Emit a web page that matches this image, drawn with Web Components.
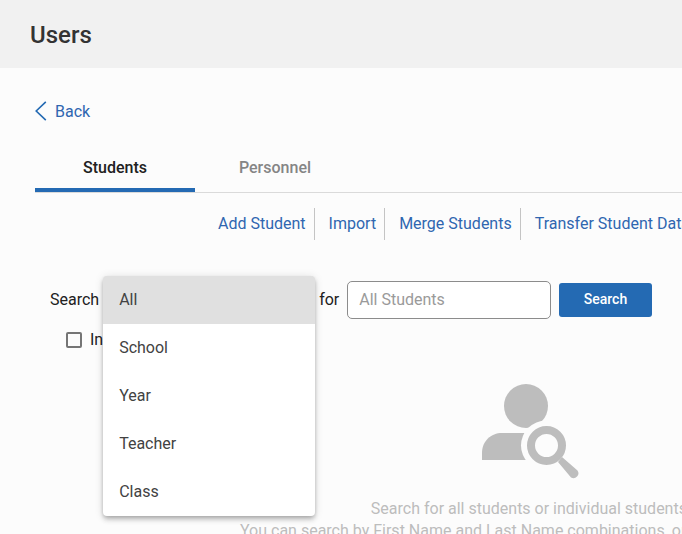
<!DOCTYPE html>
<html lang="en">
<head>
<meta charset="utf-8">
<meta name="viewport" content="width=device-width, initial-scale=1">
<title>Users</title>
<style>
    :root {
        --blue: #246ab3;
        --link: #2f66b0;
        --ink: #212121;
        --muted: #bdbdbd;
        --line: #dadada;
    }

    body {
        margin: 0;
        min-height: 100vh;
        background: #fcfcfc;
        color: var(--ink);
        font: 16px/22px Roboto, "Liberation Sans", sans-serif;
        overflow: hidden;
    }

    main {
        padding: 32px 0 0 35px;
    }
</style>
</head>
<body>
<page-header>Users</page-header>
<main>
    <back-link href="#back">Back</back-link>
    <tab-bar>
        <tab-item selected>Students</tab-item>
        <tab-item>Personnel</tab-item>
    </tab-bar>
    <action-bar>
        <action-link href="#add">Add Student</action-link>
        <action-link href="#import">Import</action-link>
        <action-link href="#merge">Merge Students</action-link>
        <action-link href="#transfer">Transfer Student Data</action-link>
    </action-bar>
    <student-search></student-search>
    <empty-state>
        <span>Search for all students or individual students.</span>
        <span slot="hint">You can search by First Name and Last Name combinations, or</span>
    </empty-state>
</main>

<script>
class PageHeader extends HTMLElement {
    constructor() {
        super();
        this.attachShadow({ mode: 'open' }).innerHTML = `
            <style>
                :host {
                    display: block;
                    padding: 19px 30px 17px;
                    background: #f1f1f1;
                }
                h1 {
                    margin: 0;
                    color: #333;
                    font-size: 24px;
                    font-weight: 500;
                    line-height: 32px;
                }
            </style>
            <h1><slot></slot></h1>
        `;
    }
}

class BackLink extends HTMLElement {
    constructor() {
        super();
        this.attachShadow({ mode: 'open' }).innerHTML = `
            <style>
                :host { display: flex; }
                a {
                    display: flex;
                    align-items: center;
                    gap: 8px;
                    color: var(--link);
                    line-height: 24px;
                    text-decoration: none;
                }
                svg {
                    fill: none;
                    stroke: var(--blue);
                    stroke-width: 1.6;
                }
            </style>
            <a href="${this.getAttribute('href')}">
                <svg width="12" height="22" viewBox="0 0 12 22" aria-hidden="true"><path d="M10.8 .8 1.2 10l9.6 9.2"/></svg>
                <slot></slot>
            </a>
        `;
    }
}

class TabBar extends HTMLElement {
    constructor() {
        super();
        this.attachShadow({ mode: 'open' }).innerHTML = `
            <style>
                :host {
                    display: flex;
                    margin-top: 20px;
                    border-bottom: 1px solid var(--line);
                }
            </style>
            <slot></slot>
        `;
        this.setAttribute('role', 'tablist');
    }

    connectedCallback() {
        this.addEventListener('click', (event) => {
            const tab = event.target.closest('tab-item');
            if (!tab) return;
            this.querySelectorAll('tab-item').forEach((item) => {
                item.toggleAttribute('selected', item === tab);
            });
        });
    }
}

class TabItem extends HTMLElement {
    static get observedAttributes() {
        return ['selected'];
    }

    constructor() {
        super();
        this.attachShadow({ mode: 'open' }).innerHTML = `
            <style>
                :host { display: block; }
                button {
                    width: 160px;
                    height: 48px;
                    padding: 4px 0 0;
                    border: 0;
                    border-bottom: 4px solid transparent;
                    background: none;
                    color: #858585;
                    font: inherit;
                    font-weight: 500;
                    cursor: pointer;
                }
                :host([selected]) button {
                    border-color: var(--blue);
                    color: var(--ink);
                }
            </style>
            <button type="button" role="tab"><slot></slot></button>
        `;
    }

    attributeChangedCallback() {
        this.shadowRoot.querySelector('button')
            .setAttribute('aria-selected', this.hasAttribute('selected'));
    }
}

class ActionBar extends HTMLElement {
    constructor() {
        super();
        this.attachShadow({ mode: 'open' }).innerHTML = `
            <style>
                :host {
                    display: flex;
                    margin: 15px 0 0 169px;
                    white-space: nowrap;
                }
            </style>
            <slot></slot>
        `;
    }
}

class ActionLink extends HTMLElement {
    constructor() {
        super();
        this.attachShadow({ mode: 'open' }).innerHTML = `
            <style>
                :host {
                    display: block;
                    padding: 0 8px 0 14px;
                    border-right: 1px solid #c4c4c4;
                    line-height: 32px;
                }
                :host(:last-child) { border: 0; }
                a {
                    color: var(--link);
                    text-decoration: none;
                }
            </style>
            <a href="${this.getAttribute('href')}"><slot></slot></a>
        `;
    }
}

class StudentSearch extends HTMLElement {
    constructor() {
        super();
        this.attachShadow({ mode: 'open' }).innerHTML = `
            <style>
                :host {
                    display: block;
                    padding: 41px 30px 0 15px;
                }
                .row {
                    display: flex;
                    align-items: center;
                }
                filter-menu {
                    width: 212px;
                    height: 38px;
                    margin: 0 4px;
                }
                .query {
                    box-sizing: border-box;
                    flex: 1;
                    min-width: 0;
                    height: 38px;
                    margin: 0 8px;
                    padding: 0 11px 2px;
                    border: 1px solid #8c8c8c;
                    border-radius: 5px;
                    background: #fff;
                    color: inherit;
                    font: inherit;
                }
                .query::placeholder { color: #9a9a9a; }
                button {
                    width: 93px;
                    height: 34px;
                    padding: 0 0 2px;
                    border: 0;
                    border-radius: 3px;
                    background: var(--blue);
                    color: #fff;
                    font: inherit;
                    font-size: 14px;
                    font-weight: 500;
                    cursor: pointer;
                }
                .include {
                    display: flex;
                    align-items: center;
                    gap: 8px;
                    margin: 10px 0 0 16px;
                }
                .include input {
                    appearance: none;
                    box-sizing: border-box;
                    width: 16px;
                    height: 16px;
                    margin: 0;
                    border: 2px solid #757575;
                    border-radius: 2px;
                }
                .include input:checked { background: var(--blue); }
            </style>
            <div class="row">
                <span>Search</span>
                <filter-menu></filter-menu>
                <label for="query">for</label>
                <input class="query" id="query" type="text" placeholder="All Students">
                <button type="button">Search</button>
            </div>
            <label class="include"><input type="checkbox">In</label>
        `;
    }
}

// Open list of search scopes, floating over the rows below it
class FilterMenu extends HTMLElement {
    constructor() {
        super();
        this.attachShadow({ mode: 'open' }).innerHTML = `
            <style>
                :host {
                    display: block;
                    position: relative;
                }
                select {
                    position: absolute;
                    z-index: 1;
                    top: -5px;
                    left: 0;
                    width: 100%;
                    height: 240px;
                    padding: 0;
                    border: 0;
                    border-radius: 4px;
                    outline: 0;
                    background: #fff;
                    box-shadow: 0 2px 4px -1px rgba(0, 0, 0, .2), 0 4px 5px rgba(0, 0, 0, .14), 0 1px 10px rgba(0, 0, 0, .12);
                    font: inherit;
                    overflow: hidden;
                    scrollbar-width: none;
                }
                option {
                    box-sizing: border-box;
                    height: 48px;
                    padding: 14px 16px;
                    color: #424242;
                }
                option:checked {
                    background: #e0e0e0 linear-gradient(#e0e0e0, #e0e0e0);
                }
            </style>
            <select size="5" aria-label="Search by">
                <option selected>All</option>
                <option>School</option>
                <option>Year</option>
                <option>Teacher</option>
                <option>Class</option>
            </select>
        `;
    }
}

class EmptyState extends HTMLElement {
    constructor() {
        super();
        this.attachShadow({ mode: 'open' }).innerHTML = `
            <style>
                :host {
                    display: flex;
                    flex-direction: column;
                    align-items: center;
                    width: 582px;
                    margin: 32px 0 0 205px;
                    color: var(--muted);
                    white-space: nowrap;
                }
                svg {
                    margin-bottom: 19px;
                    fill: var(--muted);
                }
                p { margin: 0; }
                .hint { align-self: flex-start; }
            </style>
            <svg width="98" height="96" viewBox="0 0 98 96" aria-hidden="true">
                <circle cx="44" cy="23" r="22"/>
                <path d="M0 77V70C0 58 9 50 20 50H55V77Z"/>
                <circle cx="64" cy="62.500" r="25" fill="#fcfcfc"/>
                <circle cx="64.500" cy="62.500" r="15.500" fill="none" stroke="var(--muted)" stroke-width="8"/>
                <path d="M80 74 95.500 87.500A4.900 4.900 0 0 1 89 94.500L76 79Z"/>
            </svg>
            <p><slot></slot></p>
            <p class="hint"><slot name="hint"></slot></p>
        `;
    }
}

customElements.define('page-header', PageHeader);
customElements.define('back-link', BackLink);
customElements.define('tab-bar', TabBar);
customElements.define('tab-item', TabItem);
customElements.define('action-bar', ActionBar);
customElements.define('action-link', ActionLink);
customElements.define('filter-menu', FilterMenu);
customElements.define('student-search', StudentSearch);
customElements.define('empty-state', EmptyState);
</script>
</body>
</html>
